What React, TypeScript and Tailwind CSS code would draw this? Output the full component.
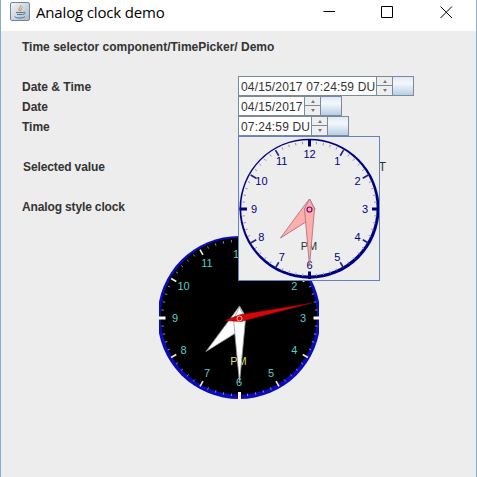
import type { ReactNode } from 'react';

const FONT = "font-['Liberation_Sans',Arial,sans-serif]";

function polar(cx: number, cy: number, r: number, deg: number): [number, number] {
  const a = (deg * Math.PI) / 180;
  return [cx + r * Math.sin(a), cy - r * Math.cos(a)];
}

const MINUTES = Array.from({ length: 60 }, (_, i) => i);
const HOURS = Array.from({ length: 12 }, (_, i) => i + 1);

type TickProps = { cx: number; cy: number; r: number; minor: string; hour: string; quarter: string; len: number };

function Ticks({ cx, cy, r, minor, hour, quarter, len }: TickProps) {
  return (
    <g>
      {MINUTES.map((m) => {
        const isQuarter = m % 15 === 0;
        const isHour = m % 5 === 0;
        const l = isQuarter ? len + 1 : isHour ? len : 2.5;
        const outer = isQuarter ? r + 1 : isHour ? r - 1 : r - 1.5;
        const [x1, y1] = polar(cx, cy, outer, m * 6);
        const [x2, y2] = polar(cx, cy, outer - l, m * 6);
        return (
          <line
            key={m}
            x1={x1}
            y1={y1}
            x2={x2}
            y2={y2}
            stroke={isQuarter ? quarter : isHour ? hour : minor}
            strokeWidth={isQuarter ? 3 : isHour ? 1.6 : 1}
          />
        );
      })}
    </g>
  );
}

function Numerals({ cx, cy, r, fill }: { cx: number; cy: number; r: number; fill: string }) {
  return (
    <g fill={fill} textAnchor="middle" className={`${FONT} text-[11px]`}>
      {HOURS.map((h) => {
        const [x, y] = polar(cx, cy, r, h * 30);
        return (
          <text key={h} x={x} y={y + 3.5}>
            {h}
          </text>
        );
      })}
    </g>
  );
}

function DarkClock() {
  return (
    <svg width="160" height="164" viewBox="0 0 160 164" className="block">
      <circle cx="80" cy="81.5" r="81.5" fill="#0b0bb8" />
      <circle cx="79.8" cy="80.3" r="78.2" fill="#000" />
      <Ticks cx={80.5} cy={82} r={80} minor="#8484d8" hour="#f0f0e0" quarter="#fff" len={6} />
      <Numerals cx={80} cy={82.5} r={64} fill="#4fd0c8" />
      <text x="79.5" y="129" textAnchor="middle" fill="#dcdc60" className={`${FONT} text-[11px]`}>
        PM
      </text>
      <polygon points="47,115.5 74,79 80.5,70 87,81 80,95" fill="#fff" stroke="#999" strokeWidth="0.8" />
      <polygon points="80.5,147 74.5,83 80.5,71 86.5,83" fill="#fff" stroke="#999" strokeWidth="0.8" />
      <polygon points="153,67 81,78.800 66,84.500 82,85.500" fill="#d40808" stroke="#800" strokeWidth="0.6" />
      <circle cx="80.5" cy="82.5" r="2.5" fill="none" stroke="#ffb0b0" />
    </svg>
  );
}

function LightClock() {
  return (
    <svg width="140" height="143" viewBox="0 0 140 143" className="block">
      <circle cx="70.5" cy="71.7" r="70" fill="#000080" />
      <circle cx="69.9" cy="70.9" r="67.7" fill="#ededed" />
      <Ticks cx={70.5} cy={72} r={69} minor="#9090b8" hour="#202080" quarter="#000080" len={6.5} />
      <Numerals cx={70.5} cy={72.5} r={55.5} fill="#000078" />
      <text x="70" y="113" textAnchor="middle" fill="#333" className={`${FONT} text-[11px]`}>
        PM
      </text>
      <polygon points="41.5,101 65,69 70.5,62 76,72 70,83" fill="#ffadad" stroke="#a87880" strokeWidth="0.9" />
      <polygon points="70.5,129 65.5,72 70.5,62 75.5,72" fill="#ffadad" stroke="#a87880" strokeWidth="0.9" />
      <circle cx="70.5" cy="72.5" r="2.5" fill="none" stroke="#800080" strokeWidth="1.2" />
    </svg>
  );
}

function Spinner() {
  return (
    <div className="flex h-5 w-4 flex-col border border-r-0 border-[#7a8a99] bg-[#eee]">
      <div className="flex h-[9px] items-center justify-center border-b border-[#7a8a99]">
        <svg width="4" height="3" viewBox="0 0 4 3">
          <path d="M0 3L2 0L4 3Z" fill="#777" />
        </svg>
      </div>
      <div className="flex h-[9px] items-center justify-center">
        <svg width="4" height="3" viewBox="0 0 4 3">
          <path d="M0 0L2 3L4 0Z" fill="#777" />
        </svg>
      </div>
    </div>
  );
}

function Picker({ value, width }: { value: string; width: string }) {
  return (
    <div className="flex h-5">
      <div
        className={`${width} h-5 border border-r-0 border-[#7a8a99] bg-white pl-[2px] text-[12px] leading-[20px] tracking-[0.16px] whitespace-nowrap text-[#333]`}
      >
        {value}
      </div>
      <Spinner />
      <div className="h-5 w-[22px] border border-[#7a8a99] bg-linear-to-b from-[#dfe9f3] via-[#f4f8fc] via-35% to-[#b8cfe5]" />
    </div>
  );
}

type RowProps = { label: string; indent: string; height: string; tracking?: string; children?: ReactNode };

function Row({ label, indent, height, tracking = 'tracking-normal', children }: RowProps) {
  return (
    <div className={`flex ${height}`}>
      <div className={`w-[237px] ${indent} ${tracking} text-[12px] leading-[22px] font-bold text-[#333]`}>{label}</div>
      {children}
    </div>
  );
}

function TitleBar() {
  return (
    <div className="flex h-[31px] items-start bg-white pl-[9px]">
      <div className="mt-[2px] flex h-[19px] w-5 items-center justify-center rounded-[2px] border border-[#71869a] bg-linear-to-br from-[#f1f4f6] to-[#a9bccb]">
        <svg width="16" height="16" viewBox="0 0 16 16" fill="none">
          <path d="M8.5 1C10 3 5.5 4 7.500 7M10.500 3.500C8 5 9.500 5.500 8.500 7" stroke="#d88432" />
          <path d="M4 8.500H11M5 10.500H10.500M11 8.500C14 7.500 13.500 10 11 10.500M3 12.500C2.500 14.500 12 14.500 13 12.500" stroke="#527391" />
        </svg>
      </div>
      <div className="ml-[6px] font-['Open_Sans','Noto_Sans',sans-serif] text-[15px] leading-[25px] tracking-[-0.16px] whitespace-nowrap text-black">
        Analog clock demo
      </div>
      <div className="mr-[22px] ml-auto flex pt-[6px]">
        <svg width="131" height="13" viewBox="0 0 131 13" fill="none" stroke="#000">
          <path d="M0.5 5.5H12" />
          <path d="M58.5 0.5H69.5V11.5H58.5Z" />
          <path d="M117.5 0.5L129 12M129 0.5L117.5 12" />
        </svg>
      </div>
    </div>
  );
}

export default function App() {
  return (
    <div className={`${FONT} relative h-[477px] w-[477px] overflow-hidden border-r border-l border-[#86aed3] bg-[#ededed]`}>
      <TitleBar />
      <div className="h-[45px] pt-[6px] pl-[21px] text-[12px] leading-[20px] font-bold text-[#333]">
        Time selector component/TimePicker/ Demo
      </div>
      <Row label="Date & Time" indent="pl-[21px]" height="h-5">
        <Picker value="04/15/2017 07:24:59 DU" width="w-[138px]" />
      </Row>
      <Row label="Date" indent="pl-[21px]" height="h-5">
        <Picker value="04/15/2017" width="w-[66px]" />
      </Row>
      <Row label="Time" indent="pl-[21px]" height="h-10">
        <Picker value="07:24:59 DU" width="w-[73px]" />
      </Row>
      <Row label="Selected value" indent="pl-[22px]" height="h-10" tracking="tracking-[-0.12px]">
        <div className="w-[148px] text-right text-[12px] leading-[22px] text-[#333]">T</div>
      </Row>
      <Row label="Analog style clock" indent="pl-[21px]" height="h-10" tracking="tracking-[-0.14px]" />
      <div className="ml-[158px]">
        <DarkClock />
      </div>
      <div className="absolute top-[136px] left-[237px] h-[145px] w-[142px] border border-[#6382bf] bg-[#ededed]">
        <LightClock />
      </div>
    </div>
  );
}
